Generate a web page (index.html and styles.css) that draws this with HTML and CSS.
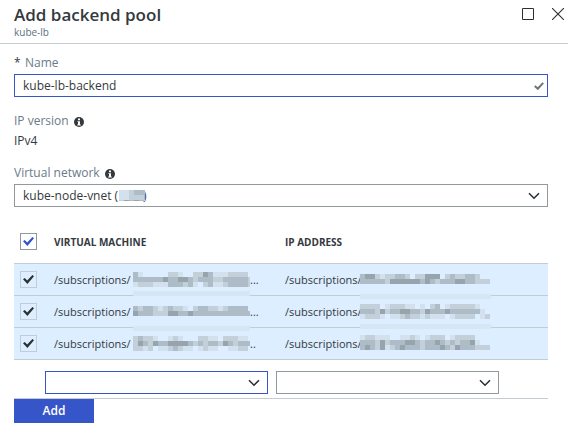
FILE: index.html
```html
<!DOCTYPE html>
<html lang="en">
<head>
<meta charset="utf-8">
<title>Add backend pool</title>
<link rel="stylesheet" href="styles.css">
</head>
<body>
<svg class="defs" aria-hidden="true">
  <symbol id="chevron" viewBox="0 0 12 8"><path d="M1 1.2 6 6.2 11 1.2" fill="none" stroke="#2b3036" stroke-width="1.6"/></symbol>
  <symbol id="info" viewBox="0 0 10 10"><circle cx="5" cy="5" r="5" fill="#34393e"/><path d="M4 1.6h2v1.6H4zM3.4 4.2H6v3.3h.8v1H3.2v-1H4V5.1h-.6z" fill="#fff"/></symbol>
</svg>
<header class="blade-header">
  <div>
    <h1>Add backend pool</h1>
    <p class="subtitle">kube-lb</p>
  </div>
  <div class="window-actions">
    <button type="button" aria-label="Maximize"><svg width="12" height="12" viewBox="0 0 12 12"><path d="M.5.5h11v11H.5z" fill="none" stroke="#2b3036"/></svg></button>
    <button type="button" aria-label="Close"><svg width="12" height="12" viewBox="0 0 12 12"><path d="M0 0 12 12M12 0 0 12" fill="none" stroke="#2b3036" stroke-width="1.1"/></svg></button>
  </div>
</header>
<main>
  <form class="form">
    <div class="row">
      <label class="label" for="name"><span class="required">*</span>Name</label>
      <div class="field">
        <input id="name" class="control active" type="text" value="kube-lb-backend">
        <svg class="valid" viewBox="0 0 10 8"><path d="M.8 4 3.8 6.8 9.2.9" fill="none" stroke="#6d7478" stroke-width="2"/></svg>
      </div>
    </div>
    <div class="row version">
      <div class="label">IP version <svg class="info"><use href="#info"/></svg></div>
      <div class="value">IPv4</div>
    </div>
    <div class="row network">
      <label class="label" for="vnet">Virtual network <svg class="info"><use href="#info"/></svg></label>
      <div class="field">
        <select id="vnet" class="control"><option>kube-node-vnet (&nbsp;&nbsp;&nbsp;&nbsp;&nbsp;&nbsp;&nbsp;&nbsp;)</option></select>
        <svg class="mosaic vnet-mask" data-top="0" data-cells="112333 112223 243432"></svg>
        <svg class="chevron"><use href="#chevron"/></svg>
      </div>
    </div>
    <table>
      <thead>
        <tr>
          <th class="pick"><input type="checkbox" aria-label="Select all" checked></th>
          <th class="vm">Virtual machine</th>
          <th>IP address</th>
        </tr>
      </thead>
      <tbody>
        <tr>
          <td><input type="checkbox" aria-label="Select row 1" checked></td>
          <td><div class="path"><span>/subscriptions/</span><svg class="mosaic" data-top="8" data-band="27" data-cells="310000022100224311122220 333333433443233322333332 122211133323102311233332"></svg><span>...</span></div></td>
          <td><div class="path ip"><span>/subscriptions/</span><svg class="mosaic wide" data-top="10" data-band="30" data-cells="34421223320224440232233200 33333244444434323334433222"></svg></div></td>
        </tr>
        <tr>
          <td><input type="checkbox" aria-label="Select row 2" checked></td>
          <td><div class="path"><span>/subscriptions/</span><svg class="mosaic" data-top="10" data-band="30" data-cells="323321232210233221233330 433322244334333333333333"></svg><span>...</span></div></td>
          <td><div class="path ip"><span>/subscriptions/</span><svg class="mosaic wide" data-top="8" data-band="28" data-cells="22220122211010230122222100 33324233443324333433333310 12221011232212111012222012"></svg></div></td>
        </tr>
        <tr>
          <td><input type="checkbox" aria-label="Select row 3" checked></td>
          <td><div class="path"><span>/subscriptions/</span><svg class="mosaic" data-top="8" data-cells="232210012100022110222110 243243344443232332432333 221201123211012110011220"></svg><span>..</span></div></td>
          <td><div class="path ip"><span>/subscriptions/</span><svg class="mosaic wide" data-top="7" data-cells="12211100112101222012222000 33324233344323343232334100 34324123433323334324333222"></svg></div></td>
        </tr>
      </tbody>
    </table>
    <div class="new-entry">
      <div class="field">
        <select class="control active" aria-label="Virtual machine"><option></option></select>
        <svg class="chevron"><use href="#chevron"/></svg>
      </div>
      <div class="field">
        <select class="control" aria-label="IP address"><option></option></select>
        <svg class="chevron"><use href="#chevron"/></svg>
      </div>
    </div>
    <button class="add" type="button">Add</button>
  </form>
</main>
<script src="mosaic.js"></script>
</body>
</html>
```

FILE: styles.css
```css
* {
  box-sizing: border-box;
}

body {
  margin: 0;
  background: #fff;
  color: #34393e;
  font: 12px/16px "Open Sans", "Noto Sans", sans-serif;
}

h1,
p {
  margin: 0;
}

button,
input,
select {
  margin: 0;
  font: inherit;
  color: inherit;
}

.defs {
  display: none;
}

.blade-header {
  display: flex;
  justify-content: space-between;
  align-items: flex-start;
  padding: 3px 4px 5px 14px;
  border-bottom: 1px solid #c5ced5;
}

h1 {
  font-size: 17px;
  line-height: 23px;
  font-weight: 600;
}

.subtitle {
  font-size: 10px;
  line-height: 12px;
  color: #5d7180;
}

.window-actions {
  display: flex;
  gap: 18px;
  padding-top: 5px;
}

.window-actions button {
  display: flex;
  padding: 0;
  border: 0;
  background: none;
}

.form {
  padding: 11px 20px 0 14px;
}

.row {
  margin-bottom: 16px;
}

.network {
  margin-bottom: 13px;
}

.label {
  display: flex;
  align-items: center;
  height: 16px;
  margin-bottom: 3px;
  color: #6a7b88;
}

.required {
  width: 11px;
  color: #34393e;
}

.info {
  width: 10px;
  height: 10px;
  margin: 2px 0 0 5px;
}

.version .label {
  margin-bottom: 4px;
}

.field {
  position: relative;
}

.control {
  appearance: none;
  display: block;
  width: 100%;
  height: 23px;
  padding: 0 8px;
  border: 1px solid #8f999e;
  border-radius: 0;
  outline: 0;
  background: #fff;
}

.control.active {
  border-color: #3655c8;
}

.valid {
  position: absolute;
  top: 8px;
  right: 4px;
  width: 10px;
  height: 8px;
}

.chevron {
  position: absolute;
  top: 8px;
  right: 8px;
  width: 12px;
  height: 8px;
  pointer-events: none;
}

.vnet-mask {
  position: absolute;
  top: 6px;
  left: 105px;
  width: 26px;
  height: 11px;
}

table {
  width: 100%;
  border-collapse: separate;
  border-spacing: 0;
  table-layout: fixed;
}

th,
td {
  padding: 0;
  text-align: left;
  border-bottom: 1px solid #c3ccd3;
}

th {
  height: 44px;
  font-size: 10px;
  font-weight: 700;
  text-transform: uppercase;
}

td {
  height: 32px;
  font-size: 11px;
  background: #dceeff;
}

.pick {
  width: 40px;
}

.vm {
  width: 231px;
}

input[type="checkbox"] {
  appearance: none;
  display: grid;
  place-items: center;
  width: 17px;
  height: 17px;
  margin-left: 6px;
  border: 1px solid #c3ccd3;
}

input[type="checkbox"]::before {
  content: "";
  width: 11px;
  height: 9px;
  background: #2b3036;
  clip-path: polygon(0 48%, 16% 34%, 38% 62%, 86% 0, 100% 14%, 40% 100%);
}

th input[type="checkbox"] {
  border-color: #8f999e;
}

th input[type="checkbox"]::before {
  background: #2f52d0;
}

.path {
  display: grid;
  grid-template-columns: 79px 117px auto;
  align-items: center;
  height: 31px;
}

.path.ip {
  grid-template-columns: 75px auto;
}

.path span {
  white-space: nowrap;
}

.path .mosaic {
  position: relative;
  width: 117px;
  height: 31px;
  overflow: visible;
}

.path .wide {
  width: 131px;
}

.new-entry {
  display: grid;
  grid-template-columns: 223px 223px;
  gap: 8px;
  padding: 11px 0 4px 31px;
  border-bottom: 1px solid #c3ccd3;
}

.add {
  display: block;
  width: 80px;
  height: 24px;
  padding: 0;
  border: 0;
  background: #3655c8;
  color: #fff;
  font-weight: 600;
}
```

FILE: mosaic.js
```js
// Draws the pixelated masks: each digit of data-cells is the shade of one 5px cell.
const SHADES = ["none", "#d3e1ee", "#c4d0d9", "#aebcc8", "#98a4ac"];
const CELL = 5;
const NS = "http://www.w3.org/2000/svg";

function addRect(svg, x, y, width, height, fill) {
  const rect = document.createElementNS(NS, "rect");
  Object.entries({ x, y, width, height, fill }).forEach(([key, value]) => rect.setAttribute(key, value));
  svg.appendChild(rect);
}

document.querySelectorAll(".mosaic").forEach((svg) => {
  const top = Number(svg.dataset.top);
  const rows = svg.dataset.cells.split(" ");
  const width = svg.clientWidth || svg.getBoundingClientRect().width;
  if (svg.closest("td")) {
    addRect(svg, 0, top, width, rows.length * CELL, "#dceeff");
  }
  rows.forEach((row, r) => {
    [...row].forEach((shade, c) => {
      const cellWidth = Math.min(CELL, width - c * CELL);
      if (shade !== "0" && cellWidth > 0) {
        addRect(svg, c * CELL, top + r * CELL, cellWidth, CELL, SHADES[shade]);
      }
    });
  });
  if (svg.dataset.band) {
    addRect(svg, 0, Number(svg.dataset.band), width, CELL, "#d7e6f5");
  }
});
```
